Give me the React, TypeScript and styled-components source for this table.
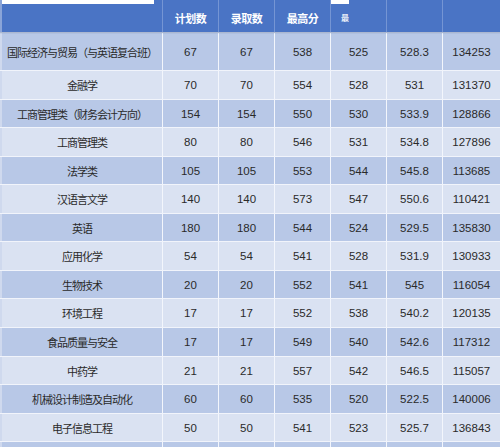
import React from "react";
import styled, { createGlobalStyle } from "styled-components";

const GlobalStyle = createGlobalStyle`
  html, body {
    margin: 0;
    padding: 0;
    background: #ffffff;
  }
  body {
    width: 500px;
    height: 447px;
    overflow: hidden;
  }
`;

type Row = [string, string, string, string, string, string, string];

const rows: Row[] = [
  ["国际经济与贸易（与英语复合班）", "67", "67", "538", "525", "528.3", "134253"],
  ["金融学", "70", "70", "554", "528", "531", "131370"],
  ["工商管理类（财务会计方向）", "154", "154", "550", "530", "533.9", "128866"],
  ["工商管理类", "80", "80", "546", "531", "534.8", "127896"],
  ["法学类", "105", "105", "553", "544", "545.8", "113685"],
  ["汉语言文学", "140", "140", "573", "547", "550.6", "110421"],
  ["英语", "180", "180", "544", "524", "529.5", "135830"],
  ["应用化学", "54", "54", "541", "528", "531.9", "130933"],
  ["生物技术", "20", "20", "552", "541", "545", "116054"],
  ["环境工程", "17", "17", "552", "538", "540.2", "120135"],
  ["食品质量与安全", "17", "17", "549", "540", "542.6", "117312"],
  ["中药学", "21", "21", "557", "542", "546.5", "115057"],
  ["机械设计制造及自动化", "60", "60", "535", "520", "522.5", "140006"],
  ["电子信息工程", "50", "50", "541", "523", "525.7", "136843"],
  ["", "", "", "", "", "", ""],
];

// measured row heights, top to bottom
const heights = [38, 29, 28, 29, 28, 29, 28, 29, 28, 29, 29, 28, 29, 28, 12];

const Table = styled.div`
  width: 500px;
  display: flex;
  flex-direction: column;
  font-family: "Liberation Sans", "Noto Sans CJK SC", sans-serif;
`;

const HeaderRow = styled.div`
  display: grid;
  grid-template-columns: 162px repeat(5, 56px) 58px;
  height: 32px;
  background: #4a74c5;
  box-shadow: 0 1px 1px rgba(40, 70, 130, 0.35);
  position: relative;
  z-index: 1;
`;

const HeadCell = styled.div<{ $cap?: number }>`
  display: flex;
  align-items: center;
  justify-content: center;
  padding-top: 3px;
  box-sizing: border-box;
  color: #ffffff;
  font-family: "Noto Sans CJK SC", sans-serif;
  font-weight: 700;
  font-size: 11px;
  letter-spacing: -0.5px;
  border-left: 1px solid #7595d4;
  background: ${(p) =>
    p.$cap
      ? `linear-gradient(#ffffff, #ffffff) 0 0 / ${p.$cap}px 4px no-repeat, #4a74c5`
      : "#4a74c5"};

  &:first-child {
    border-left: 2px solid #8aa4d8;
  }
`;

// the partly hidden title in the fifth column
const Faded = styled.span`
  margin-left: 10px;
  margin-right: auto;
  font-size: 8px;
  opacity: 0.9;
`;

const BodyRow = styled.div<{ $odd: boolean }>`
  display: grid;
  grid-template-columns: 162px repeat(5, 56px) 58px;
  box-sizing: border-box;
  border-top: 1px solid #f1f4fb;
  background: ${(p) => (p.$odd ? "#b8c8e7" : "#dae2f2")};
`;

const Cell = styled.div<{ $name?: boolean }>`
  display: flex;
  align-items: center;
  justify-content: center;
  box-sizing: border-box;
  border-left: 1px solid #f3f6fc;
  color: #2a2a2a;
  font-size: ${(p) => (p.$name ? "11px" : "11.5px")};
  letter-spacing: ${(p) => (p.$name ? "-1px" : "0")};
  font-family: ${(p) =>
    p.$name
      ? `"Noto Sans CJK SC", sans-serif`
      : `"Liberation Sans", "Noto Sans CJK SC", sans-serif`};
  white-space: nowrap;

  &:first-child {
    border-left: 2px solid #cfd9ee;
  }
`;

export default function App() {
  return (
    <>
      <GlobalStyle />
      <Table>
        <HeaderRow>
          <HeadCell $cap={152} />
          <HeadCell>计划数</HeadCell>
          <HeadCell>录取数</HeadCell>
          <HeadCell>最高分</HeadCell>
          <HeadCell $cap={18}>
            <Faded>最</Faded>
          </HeadCell>
          <HeadCell />
          <HeadCell />
        </HeaderRow>
        {rows.map((r, i) => (
          <BodyRow key={i} $odd={i % 2 === 0} style={{ height: heights[i] }}>
            {r.map((v, j) => (
              <Cell key={j} $name={j === 0}>
                {v}
              </Cell>
            ))}
          </BodyRow>
        ))}
      </Table>
    </>
  );
}
